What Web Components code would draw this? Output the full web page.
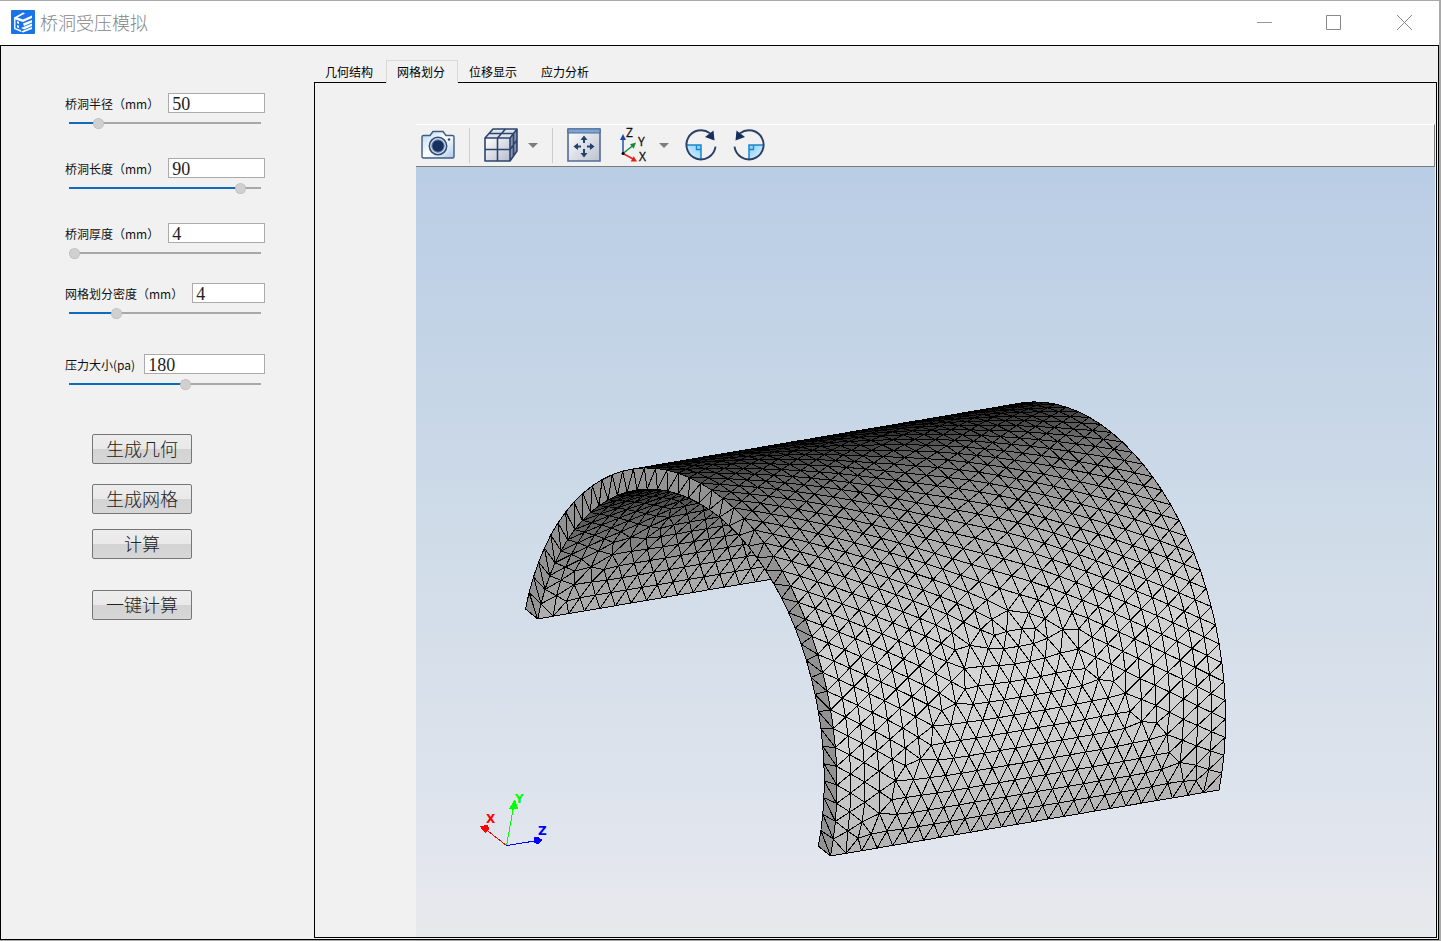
<!DOCTYPE html>
<html lang="zh-CN">
<head>
<meta charset="utf-8">
<title>桥洞受压模拟</title>
<style>
  html, body { height: 100%; }
  body {
    margin: 0;
    box-sizing: border-box;
    padding: 1px 2px 1px 0;
    background: #a9a9a9;
    color: #000;
    font: 12px/16px "Noto Sans", "Noto Sans CJK SC", sans-serif;
  }
</style>
</head>
<body>
<app-window>
  <title-bar slot="title">桥洞受压模拟</title-bar>
  <param-form slot="side">
    <param-field label="桥洞半径（mm）" value="50" min="40" max="115"></param-field>
    <param-field label="桥洞长度（mm）" value="90" min="10" max="97"></param-field>
    <param-field label="桥洞厚度（mm）" value="4" min="4" max="20"></param-field>
    <param-field class="tight" label="网格划分密度（mm）" value="4" min="1" max="14"></param-field>
    <param-field class="loose" label="压力大小(pa)" value="180" min="20" max="280"></param-field>
    <action-button slot="actions">生成几何</action-button>
    <action-button slot="actions">生成网格</action-button>
    <action-button slot="actions">计算</action-button>
    <action-button slot="actions" class="apart">一键计算</action-button>
  </param-form>
  <tab-panel tabs="几何结构,网格划分,位移显示,应力分析" selected="1">
    <view-toolbar></view-toolbar>
    <mesh-view></mesh-view>
  </tab-panel>
</app-window>

<script>
const shadow = (host, html) => {
  const root = host.attachShadow({ mode: 'open' });
  root.innerHTML = html;
  return root;
};

class AppWindow extends HTMLElement {
  constructor() {
    super();
    shadow(this, `
      <style>
        :host { display: flex; flex-direction: column; box-sizing: border-box; min-height: 100%; background: #fff; }
        .body { flex: 1; display: grid; grid-template-columns: 313px minmax(0, 1fr); box-sizing: border-box;
                border: 1px solid #000; background: #f1f1f1; }
        main { display: flex; min-width: 0; padding: 14px 1px 1px 0; }
      </style>
      <slot name="title"></slot>
      <div class="body"><slot name="side"></slot><main><slot></slot></main></div>`);
  }
}

class TitleBar extends HTMLElement {
  constructor() {
    super();
    shadow(this, `
      <style>
        :host { display: flex; align-items: center; height: 44px; padding: 0 22px 2px 11px; background: #fff; box-sizing: border-box; }
        .logo { flex: none; margin-right: 5px; }
        h1 { flex: 1; margin: 0; font: 300 18px/24px "Noto Sans CJK SC", sans-serif; color: #858585; }
        .controls { display: flex; gap: 46px; }
        button { width: 24px; height: 24px; padding: 0; border: 0; background: none; }
        svg { display: block; }
      </style>
      <svg class="logo" width="24" height="24" viewBox="0 0 24 24" aria-hidden="true">
        <rect width="24" height="24" rx="1" fill="#1a73e8"/>
        <path d="M3 7.500 12 2.500l2 1L6.500 7.500l5.500 2 9-4v2.500L12 12 3 9Z" fill="#fff"/>
        <path d="M3 8.500h1.500v9.500l5.500 2v2l-7-3Z" fill="#e8f1fe"/>
        <path d="M12 13.500 21 10v2.500l-8 3.500ZM10 18l11-4.500v2.500L13 19.500ZM10 21.500l11-4.500v2L12 22.500Z" fill="#fff"/>
        <path d="M6 11l2 .7v2.200l-2-.7ZM6 15l2 .7v2.200l-2-.7Z" fill="#fff"/>
      </svg>
      <h1><slot></slot></h1>
      <div class="controls">
        <button aria-label="最小化"><svg width="24" height="24"><path d="M4 12.500h15" stroke="#999"/></svg></button>
        <button aria-label="最大化"><svg width="24" height="24"><path d="M3.500 5.500h14v14h-14z" fill="none" stroke="#888"/></svg></button>
        <button aria-label="关闭"><svg width="24" height="24"><path d="M4 5l15 15M19 5 4 20" stroke="#888"/></svg></button>
      </div>`);
  }
}

class ParamForm extends HTMLElement {
  constructor() {
    super();
    shadow(this, `
      <style>
        :host { display: block; }
        form { display: flex; flex-direction: column; padding: 47px 49px 0 64px; }
        .actions { display: flex; flex-direction: column; align-items: flex-start; padding: 15px 0 0 27px; }
        ::slotted(param-field) { margin-bottom: 25px; }
        ::slotted(.tight) { margin-top: -5px; margin-bottom: 31px; }
        ::slotted(action-button) { margin-bottom: 20px; }
        ::slotted(action-button:nth-of-type(2)) { margin-bottom: 15px; }
        ::slotted(.apart) { margin-top: 11px; }
      </style>
      <form><slot></slot><div class="actions"><slot name="actions"></slot></div></form>`);
  }
}

class ParamField extends HTMLElement {
  connectedCallback() {
    if (this.shadowRoot) return;
    const at = n => this.getAttribute(n);
    const root = shadow(this, `
      <style>
        :host { display: block; }
        .row { display: flex; align-items: center; height: 20px; }
        label { flex: none; white-space: nowrap; margin-right: 9px; padding-top: 1px;
                font: 12px/16px "Noto Sans CJK SC", sans-serif; color: #111; }
        .text { flex: 1; min-width: 0; height: 20px; box-sizing: border-box; margin: 0; padding: 2px 3px 0;
                border: 1px solid #ababab; background: #fff; color: #222;
                font: 18px/18px "Liberation Serif", serif; }
        .range { -webkit-appearance: none; appearance: none; display: block; box-sizing: border-box;
                 width: calc(100% - 8px); height: 20px; margin: 0 4px; background: none; }
        .range::-webkit-slider-runnable-track { height: 2px;
                 background: linear-gradient(90deg, #0f6cbd var(--fill), #a8a8a8 var(--fill)); }
        .range::-webkit-slider-thumb { -webkit-appearance: none; box-sizing: border-box; width: 11px; height: 11px;
                 margin-top: -4px; border: 1px dotted #b4b4b4; border-radius: 50%; background: #d0d0d0; }
      </style>
      <div class="row"><label for="t">${at('label')}</label><input class="text" id="t" value="${at('value')}"></div>
      <input class="range" type="range" step="any" aria-label="${at('label')}"
             min="${at('min')}" max="${at('max')}" value="${at('value')}">`);
    const text = root.querySelector('.text'), range = root.querySelector('.range');
    const paint = () => {
      const f = (range.value - range.min) / (range.max - range.min);
      range.style.setProperty('--fill', f * 100 + '%');
    };
    range.addEventListener('input', () => { text.value = Math.round(range.value); paint(); });
    text.addEventListener('change', () => { range.value = text.value; paint(); });
    paint();
  }
}

class ActionButton extends HTMLElement {
  constructor() {
    super();
    shadow(this, `
      <style>
        :host { display: block; }
        button { display: block; width: 100px; height: 30px; padding: 0 0 2px; box-sizing: border-box;
                 border: 1px solid #767676; border-radius: 2px;
                 background: linear-gradient(#ededed, #e9e9e9 50%, #d3d3d3 50%, #d7d7d7);
                 font: 300 18px/24px "Noto Sans CJK SC", sans-serif; color: #222; }
      </style>
      <button type="button"><slot></slot></button>`);
  }
}

class TabPanel extends HTMLElement {
  connectedCallback() {
    if (this.shadowRoot) return;
    const sel = +this.getAttribute('selected');
    const tabs = this.getAttribute('tabs').split(',').map((t, i) =>
      `<button role="tab" aria-selected="${i === sel}">${t}</button>`).join('');
    const root = shadow(this, `
      <style>
        :host { flex: 1; min-width: 0; display: flex; flex-direction: column; }
        [role=tablist] { display: flex; height: 22px; }
        button { width: 72px; height: 23px; box-sizing: border-box; padding: 0 2px 0 0; border: 1px solid transparent;
                 border-bottom: 0; background: none; color: #000; font: 12px/22px "Noto Sans CJK SC", sans-serif; }
        [aria-selected=true] { position: relative; border-color: #d9d9d9; background: #f1f1f1; }
        .pane { flex: 1; display: flex; flex-direction: column; border: 1px solid #000; padding: 41px 1px 0 101px; }
      </style>
      <div role="tablist">${tabs}</div>
      <div class="pane" role="tabpanel"><slot></slot></div>`);
    const all = [...root.querySelectorAll('button')];
    all.forEach(b => b.addEventListener('click', () =>
      all.forEach(o => o.setAttribute('aria-selected', o === b))));
  }
}

class ViewToolbar extends HTMLElement {
  constructor() {
    super();
    const caret = '<svg width="10" height="34" viewBox="0 0 10 34"><path d="M0 15h10l-5 5Z" fill="#7c7c7c"/></svg>';
    const turn = `
        <path d="M18 17v14.500A14.500 14.500 0 0 1 4 17Z" fill="url(#g)"/>
        <path d="M4 17h14v14" fill="none" stroke="#1a86cc" stroke-width="1.500"/>
        <path d="M13.500 17.500v4h4.500" fill="none" stroke="#1a86cc" stroke-width="1.300"/>
        <path d="M32.500 18.700A14.600 14.600 0 1 1 27 5.300" fill="none" stroke="#2c4066" stroke-width="1.900"/>
        <path d="M30.500 2.500 31.500 12.500l-9.500-3.500Z" fill="#182f5e"/>`;
    const blue = '<defs><linearGradient id="g" x1="0" y1="1" x2="1" y2="0"><stop stop-color="#e4f6ff"/><stop offset="1" stop-color="#84cdf4"/></linearGradient></defs>';
    shadow(this, `
      <style>
        :host { display: flex; align-items: center; gap: 14px; box-sizing: border-box; height: 43px; padding: 0 5px 1px;
                border: solid; border-width: 1px 1px 1px 0; border-color: #fff #7b7b7b #7b7b7b; background: #f1f1f1; }
        button { display: flex; gap: 10px; padding: 0; border: 0; background: none; }
        hr { width: 1px; height: 35px; margin: 0; border: 0; background: #cdcdcd; }
        svg { display: block; overflow: visible; }
        text { font: 12px "Open Sans", sans-serif; fill: #111; stroke: #111; stroke-width: .3px; }
      </style>
      <button aria-label="截图"><svg width="34" height="34" viewBox="0 0 34 34">
        <defs><linearGradient id="c" x2="1" y2="1"><stop stop-color="#b5d6ef"/><stop offset=".5" stop-color="#fff"/><stop offset="1" stop-color="#a9cbe8"/></linearGradient></defs>
        <path d="M2.500 7.500H9l3-4h10l3 4h6.500q1.500 0 1.500 1.500v19.500q0 1.500-1.500 1.500h-29Q1 30 1 28.500V9q0-1.500 1.500-1.500Z" fill="url(#c)" stroke="#405b85" stroke-width="1.400"/>
        <circle cx="17" cy="18" r="8.700" fill="#cddff0" stroke="#354a75" stroke-width="1.500"/>
        <circle cx="17" cy="18" r="6.200" fill="#16305f" stroke="#6e87ad"/>
        <circle cx="28" cy="11.500" r="1.300" fill="#354a75"/></svg></button>
      <hr>
      <button aria-label="显示样式"><svg width="34" height="34" viewBox="0 0 34 34">
        <defs><linearGradient id="k" x2="1" y2="1"><stop stop-color="#fff"/><stop offset="1" stop-color="#b4bdce"/></linearGradient></defs>
        <path d="M1 10 9 1h24l-7 9Z" fill="#dfe5ee"/><path d="M1 10h25v23H1Z" fill="url(#k)"/><path d="m26 10 7-9v22l-7 10Z" fill="#8593ae"/>
        <path d="M1 10 9 1h24v22l-7 10H1ZM1 10h25v23M26 10l7-9M13.500 33V10l8-9M1 21.500h25l7-9.500M5 5.500h24.500V28" fill="none" stroke="#2e446d" stroke-width="1.600" stroke-linejoin="round"/></svg>${caret}</button>
      <hr>
      <button aria-label="适应窗口"><svg width="34" height="34" viewBox="0 0 34 34">
        <defs><linearGradient id="w" x2="1" y2="1"><stop stop-color="#fff"/><stop offset="1" stop-color="#bcc3cf"/></linearGradient></defs>
        <path d="M1 1h32v32H1Z" fill="url(#w)" stroke="#506b97" stroke-width="1.600"/><path d="M1 1h32v4H1Z" fill="#7fa5d3" stroke="#506b97"/>
        <path d="M17 9v6M17 21v7M8 18.500h6M20 18.500h6" stroke="#24406f" stroke-width="2"/>
        <path d="m17 7.500 3.500 4.500h-7ZM17 29.500l3.500-4.500h-7ZM6.500 18.500l4.500-3.500v7ZM27.500 18.500 23 15v7Z" fill="#24406f"/></svg></button>
      <button aria-label="视图方向"><svg width="34" height="34" viewBox="0 0 34 34">
        <path d="M8 25.500V9" stroke="#2450a8" stroke-width="1.500"/><path d="m8 6 3 6H5Z" fill="#1e46a4"/>
        <path d="m8 25.500 10-8" stroke="#12893c" stroke-width="1.500"/><path d="m21 14.500-6 1.700 3.700 4.500Z" fill="#12893c"/>
        <path d="m8 25.500 11 6" stroke="#e8201c" stroke-width="1.500"/><path d="m22 33.500-6.300 0 3-5.200Z" fill="#e8201c"/>
        <circle cx="8" cy="25.500" r="1.500"/>
        <text x="11" y="9">Z</text><text x="23" y="18">Y</text><text x="24" y="33">X</text></svg>${caret}</button>
      <button aria-label="顺时针旋转"><svg width="34" height="34" viewBox="0 0 34 34">${blue}${turn}</svg></button>
      <button aria-label="逆时针旋转"><svg width="34" height="34" viewBox="0 0 34 34">${blue}<g transform="matrix(-1 0 0 1 36 0)">${turn}</g></svg></button>`);
  }
}

/* Incremental Delaunay triangulation of a small point set. */
function triangulate(pts) {
  const n = pts.length, P = pts.concat([[-9000, -8000], [9000, -8000], [0, 12000]]);
  const make = (a, b, c) => {
    const [ax, ay] = P[a], bx = P[b][0] - ax, by = P[b][1] - ay, cx = P[c][0] - ax, cy = P[c][1] - ay;
    const d = 2 * (bx * cy - by * cx), b2 = bx * bx + by * by, c2 = cx * cx + cy * cy;
    const x = (cy * b2 - by * c2) / d, y = (bx * c2 - cx * b2) / d;
    return { v: [a, b, c], x: x + ax, y: y + ay, r: x * x + y * y };
  };
  let tris = [make(n, n + 1, n + 2)];
  for (let i = 0; i < n; i++) {
    const [x, y] = P[i], keep = [], edges = new Map();
    for (const t of tris) {
      if ((t.x - x) ** 2 + (t.y - y) ** 2 < t.r) {
        for (let k = 0; k < 3; k++) {
          const a = t.v[k], b = t.v[(k + 1) % 3], rev = b * 10000 + a;
          if (edges.has(rev)) edges.delete(rev); else edges.set(a * 10000 + b, [a, b]);
        }
      } else keep.push(t);
    }
    for (const [a, b] of edges.values()) keep.push(make(a, b, i));
    tris = keep;
  }
  return tris.map(t => t.v).filter(v => v.every(i => i < n));
}

/* Mesh of an unrolled W x H cylinder sheet, with rows grown inward from each side. */
function sheet(W, H) {
  const nu = 25, nv = 44, hu = W / nu, hv = H / nv, row = 3.12, pts = [], fixed = [];
  let seed = 7;
  const rnd = () => (seed = seed * 16807 % 2147483647) / 2147483647 - 0.5;
  const add = (u, v, f) => {
    if (!f && pts.some(p => Math.hypot(p[0] - u, p[1] - v) < 2.7)) return;
    pts.push(f ? [u, v] : [u + rnd() * 0.03, v + rnd() * 0.03]); fixed.push(f);
  };
  for (let i = 0; i <= nu; i++) { add(i * hu, 0, true); add(i * hu, H, true); }
  for (let j = 1; j < nv; j++) { add(0, j * hv, true); add(W, j * hv, true); }
  for (let k = 1; k < 16; k++) {
    const d = k * row, s = (k % 2) / 2;
    for (let i = 0; i <= nu; i++) {
      const u = (i + s) * hu;
      if (Math.min(u, W - u) >= d) { add(u, d, false); add(u, H - d, false); }
    }
    for (let j = 0; j <= nv; j++) {
      const v = (j + s) * hv;
      if (Math.min(v, H - v) >= d && d <= W / 2 + 1) { add(d, v, false); add(W - d, v, false); }
    }
  }
  let tris;
  for (let pass = 0; pass < 4; pass++) {
    tris = triangulate(pts);
    if (pass === 3) break;
    const sum = pts.map(() => [0, 0, 0]);
    for (const t of tris) for (let k = 0; k < 3; k++) for (const o of [t[(k + 1) % 3], t[(k + 2) % 3]]) {
      const s = sum[t[k]]; s[0] += pts[o][0]; s[1] += pts[o][1]; s[2]++;
    }
    pts.forEach((p, i) => { if (!fixed[i] && sum[i][2]) { p[0] = sum[i][0] / sum[i][2]; p[1] = sum[i][1] / sum[i][2]; } });
  }
  return { pts, tris };
}

class MeshView extends HTMLElement {
  constructor() {
    super();
    shadow(this, `
      <style>
        :host { flex: 1; display: block; position: relative; min-height: 400px;
                background: linear-gradient(#b9cde5, #d0dce8 50%, #dfe4ed 84%, #e8e9ed); }
        svg { position: absolute; inset: 0; width: 100%; height: 100%; }
        .mesh { shape-rendering: crispEdges; }
        .lines { fill: none; stroke: #000; stroke-width: 1; }
        text { font: bold 12px "DejaVu Sans", sans-serif; }
      </style>
      <svg viewBox="416 167 1018 770" preserveAspectRatio="xMinYMin meet" role="img" aria-label="网格模型">
        <g class="mesh">${this.arch()}</g>
        <g stroke-width="1" shape-rendering="crispEdges">
          <path d="M506.500 845.500 484 828" stroke="#f00"/><path d="m480 826 8-1 1 4-4 4-3-3Z" fill="#f00"/>
          <path d="M506.500 845.500 514 804" stroke="#0f0"/><path d="m515 799 3 10h-9Z" fill="#0f0"/>
          <path d="M506.500 845.500 538 840.500" stroke="#00f"/><path d="m543 840-5-3h-4v6l4 1Z" fill="#00f"/>
        </g>
        <text x="486" y="823" fill="#f00">X</text><text x="515" y="803" fill="#0f0">Y</text><text x="538" y="835" fill="#00f">Z</text>
      </svg>`);
  }
  arch() {
    const R = 50, r = 46, L = 90;
    const project = (rad, a, z) => {
      const c = Math.cos(a) * rad / R, s = Math.sin(a) * rad / R;
      return [678 + 152.5 * c + 45 * s + 388.5 * z / L, 732.5 + 123.5 * c - 234 * s - 66 * z / L];
    };
    const pt = q => q[0].toFixed(1) + ' ' + q[1].toFixed(1);
    const d = p => 'M' + p.map(pt).join('L') + 'Z';
    const grey = k => { const g = Math.round(k / 3) * 3; return `rgb(${g},${g},${g})`; };
    /* Every edge is stroked once, so shared edges stay one pixel wide. */
    const wire = polys => {
      const seen = new Set();
      for (const p of polys) p.forEach((q, k) => {
        const ends = [pt(q), pt(p[(k + 1) % p.length])].sort();
        seen.add(`M${ends[0]}L${ends[1]}`);
      });
      return `<path class="lines" d="${[...seen].join('')}"/>`;
    };
    const surface = (rad, side) => {
      const { pts, tris } = sheet(L, Math.PI * rad), groups = new Map(), drawn = [];
      for (const t of tris) {
        const [a, b, c] = t.map(i => pts[i]);
        const flat = (b[0] - a[0]) * (c[1] - a[1]) - (b[1] - a[1]) * (c[0] - a[0]);
        if (Math.abs(flat) < 0.3) continue;
        const q = [a, b, c].map(p => project(rad, p[1] / rad, p[0]));
        const facing = (q[1][0] - q[0][0]) * (q[2][1] - q[0][1]) - (q[1][1] - q[0][1]) * (q[2][0] - q[0][0]);
        if (facing * flat * side < 0) continue;
        const ang = (a[1] + b[1] + c[1]) / 3 / rad - 0.56;
        const key = grey(16 + 196 * Math.pow(Math.max(0, -side * Math.cos(ang)), 1.2));
        groups.set(key, (groups.get(key) || '') + d(q));
        drawn.push(q);
      }
      return [...groups].map(([k, v]) => `<path fill="${k}" d="${v}"/>`).join('') + wire(drawn);
    };
    const ring = [];
    for (let i = 0; i < 44; i++) {
      const a = Math.PI * i / 44, b = Math.PI * (i + 1) / 44;
      const o1 = project(R, a, 0), o2 = project(R, b, 0), i1 = project(r, a, 0), i2 = project(r, b, 0);
      ring.push([o1, i1, i2], [o1, i2, o2]);
    }
    return surface(r, 1) + surface(R, -1) + `<path fill="#929292" d="${ring.map(d).join('')}"/>` + wire(ring);
  }
}

customElements.define('title-bar', TitleBar);
customElements.define('param-field', ParamField);
customElements.define('action-button', ActionButton);
customElements.define('param-form', ParamForm);
customElements.define('view-toolbar', ViewToolbar);
customElements.define('mesh-view', MeshView);
customElements.define('tab-panel', TabPanel);
customElements.define('app-window', AppWindow);
</script>
</body>
</html>
